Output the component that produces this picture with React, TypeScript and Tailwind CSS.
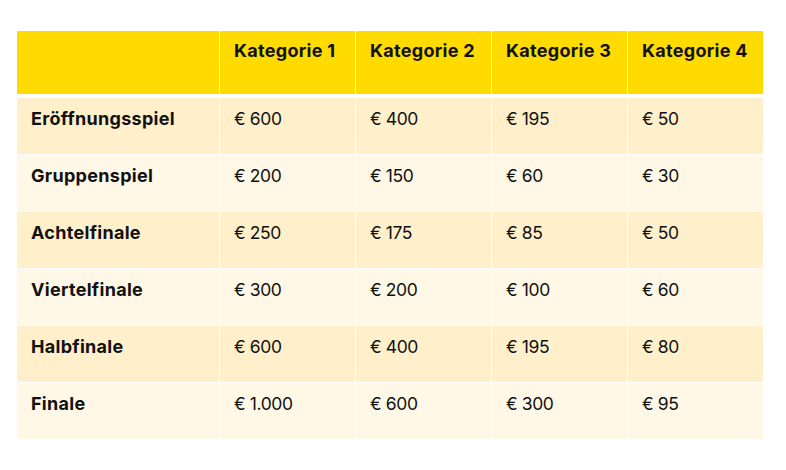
const header = ['Kategorie 1', 'Kategorie 2', 'Kategorie 3', 'Kategorie 4'];

const rows: [string, string[]][] = [
  ['Eröffnungsspiel', ['€ 600', '€ 400', '€ 195', '€ 50']],
  ['Gruppenspiel', ['€ 200', '€ 150', '€ 60', '€ 30']],
  ['Achtelfinale', ['€ 250', '€ 175', '€ 85', '€ 50']],
  ['Viertelfinale', ['€ 300', '€ 200', '€ 100', '€ 60']],
  ['Halbfinale', ['€ 600', '€ 400', '€ 195', '€ 80']],
  ['Finale', ['€ 1.000', '€ 600', '€ 300', '€ 95']],
];

const grid = 'grid grid-cols-[202px_135px_135px_135px_135px] gap-x-px';
const bold = 'pl-3.5 font-bold text-[18px] tracking-[0.3px] leading-6';
const plain = 'pl-3.5 text-[17.5px] tracking-[-0.4px] leading-6';

export default function App() {
  return (
    <div className="w-[786px] h-[470px] bg-white pt-[31px] pl-[17px] font-['Inter',sans-serif] text-[#111]">
      <div className="flex flex-col w-[744px]">
        {/* header */}
        <div className={`${grid} h-[63px] mb-1`}>
          <div className="bg-[#FFDB00]" />
          {header.map((h) => (
            <div key={h} className={`bg-[#FFDB00] pt-2 ${bold}`}>
              {h}
            </div>
          ))}
        </div>

        {/* body */}
        <div className="flex flex-col gap-y-px">
          {rows.map(([label, vals], i) => {
            const bg = i % 2 === 0 ? 'bg-[#FFF0CB]' : 'bg-[#FFF8E6]';
            return (
              <div key={label} className={`${grid} h-14`}>
                <div className={`${bg} pt-[9px] ${bold}`}>{label}</div>
                {vals.map((v, j) => (
                  <div key={j} className={`${bg} pt-[9px] ${plain}`}>
                    {v}
                  </div>
                ))}
              </div>
            );
          })}
        </div>
      </div>
    </div>
  );
}
